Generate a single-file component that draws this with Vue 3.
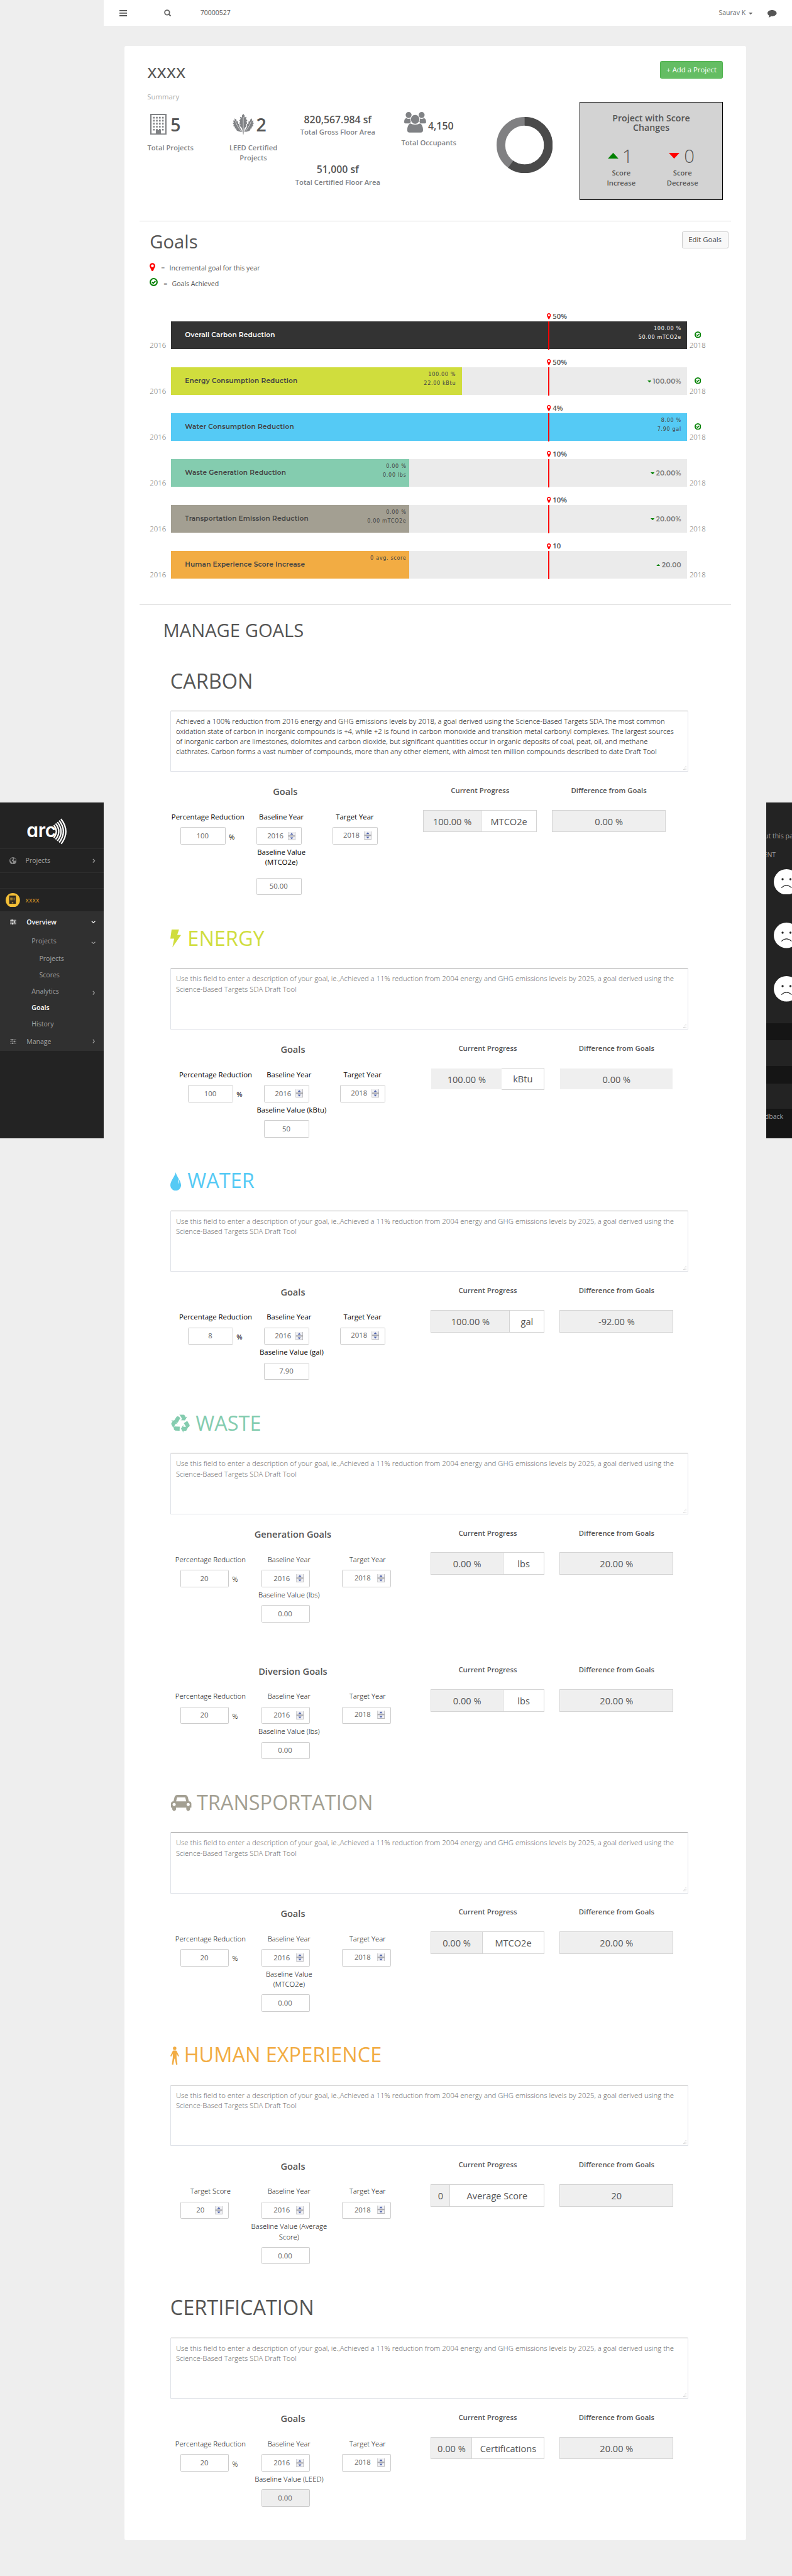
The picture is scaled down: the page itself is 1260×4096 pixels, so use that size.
<script setup>
const bars = [
  { name: 'Overall Carbon Reduction', color: '#333333', text: '#ffffff', fill: 1011, pad: 11, lines: ['100.00 %', '50.00 mTCO2e'], pin: '50%', done: true },
  { name: 'Energy Consumption Reduction', color: '#d0dd3d', text: '#444444', fill: 570, pad: 12, lines: ['100.00 %', '22.00 kBtu'], pin: '50%', delta: '100.00%', dir: 'down', done: true },
  { name: 'Water Consumption Reduction', color: '#55caf5', text: '#444444', fill: 1011, pad: 11, lines: ['8.00 %', '7.90 gal'], pin: '4%', done: true },
  { name: 'Waste Generation Reduction', color: '#84ccaf', text: '#444444', fill: 466, pad: 5, lines: ['0.00 %', '0.00 lbs'], pin: '10%', delta: '20.00%', dir: 'down' },
  { name: 'Transportation Emission Reduction', color: '#a39f92', text: '#444444', fill: 466, pad: 5, lines: ['0.00 %', '0.00 mTCO2e'], pin: '10%', delta: '20.00%', dir: 'down' },
  { name: 'Human Experience Score Increase', color: '#f2ac43', text: '#444444', fill: 466, pad: 5, lines: ['0 avg. score'], pin: '10', delta: '20.00', dir: 'up' },
]

const hint = 'Use this field to enter a description of your goal, ie.,Achieved a 11% reduction from 2004 energy and GHG emissions levels by 2025, a goal derived using the Science-Based Targets SDA Draft Tool'

const sections = [
  {
    key: 'carbon', title: 'CARBON', layout: 'first', height: 504,
    text: 'Achieved a 100% reduction from 2016 energy and GHG emissions levels by 2018, a goal derived using the Science-Based Targets SDA.The most common oxidation state of carbon in inorganic compounds is +4, while +2 is found in carbon monoxide and transition metal carbonyl complexes. The largest sources of inorganic carbon are limestones, dolomites and carbon dioxide, but significant quantities occur in organic deposits of coal, peat, oil, and methane clathrates. Carbon forms a vast number of compounds, more than any other element, with almost ten million compounds described to date Draft Tool',
    groups: [{ title: 'Goals', label: 'Percentage Reduction', value: '100', base: ['Baseline Value', '(MTCO2e)'], baseValue: '50.00', progress: '100.00 %', unit: 'MTCO2e', cell: 113, diff: '0.00 %' }],
  },
  {
    key: 'energy', title: 'ENERGY', icon: 'bolt', layout: 'shifted', height: 475,
    groups: [{ title: 'Goals', label: 'Percentage Reduction', value: '100', base: ['Baseline Value (kBtu)'], baseValue: '50', progress: '100.00 %', unit: 'kBtu', cell: 139, diff: '0.00 %', flat: true }],
  },
  {
    key: 'water', title: 'WATER', icon: 'drop', layout: 'shifted', height: 475,
    groups: [{ title: 'Goals', label: 'Percentage Reduction', value: '8', base: ['Baseline Value (gal)'], baseValue: '7.90', progress: '100.00 %', unit: 'gal', cell: 154, diff: '-92.00 %' }],
  },
  {
    key: 'waste', title: 'WASTE', icon: 'recycle', layout: 'wide', height: 743,
    groups: [
      { title: 'Generation Goals', label: 'Percentage Reduction', value: '20', base: ['Baseline Value (lbs)'], baseValue: '0.00', progress: '0.00 %', unit: 'lbs', cell: 141, diff: '20.00 %' },
      { title: 'Diversion Goals', label: 'Percentage Reduction', value: '20', base: ['Baseline Value (lbs)'], baseValue: '0.00', progress: '0.00 %', unit: 'lbs', cell: 141, diff: '20.00 %' },
    ],
  },
  {
    key: 'transport', title: 'TRANSPORTATION', icon: 'car', layout: 'wide', height: 495,
    groups: [{ title: 'Goals', label: 'Percentage Reduction', value: '20', base: ['Baseline Value', '(MTCO2e)'], baseValue: '0.00', progress: '0.00 %', unit: 'MTCO2e', cell: 100, diff: '20.00 %' }],
  },
  {
    key: 'human', title: 'HUMAN EXPERIENCE', icon: 'person', layout: 'wide', height: 495,
    groups: [{ title: 'Goals', label: 'Target Score', value: '20', spin: true, base: ['Baseline Value (Average', 'Score)'], baseValue: '0.00', progress: '0', unit: 'Average Score', cell: 37, diff: '20' }],
  },
  {
    key: 'cert', title: 'CERTIFICATION', layout: 'wide', height: 479,
    groups: [{ title: 'Goals', label: 'Percentage Reduction', value: '20', base: ['Baseline Value (LEED)'], baseValue: '0.00', disabled: true, progress: '0.00 %', unit: 'Certifications', cell: 80, diff: '20.00 %' }],
  },
]

const menu = [
  { text: 'Projects', level: 1, chev: 'down', h: 36 },
  { text: 'Projects', level: 2, h: 32 },
  { text: 'Scores', level: 2, h: 32 },
  { text: 'Analytics', level: 1, chev: 'right', h: 32 },
  { text: 'Goals', level: 1, active: true, h: 32 },
  { text: 'History', level: 1, h: 32 },
]
const windowRows = [0, 1, 2, 3, 4]

// Cells of the form row: first is the target value, the other two are year pickers.
const cellsOf = (g) => [
  { value: g.value, spin: g.spin, pct: !g.spin },
  { value: '2016', spin: true },
  { value: '2018', spin: true, up: true },
]
</script>

<template>
  <div class="page">
    <header class="topbar">
      <svg class="burger" width="15" height="13" viewBox="0 0 15 13"><path d="M0 0h15v2.200H0zM0 5h15v2.200H0zM0 10h15v2.200H0z" fill="#555" /></svg>
      <svg class="search" width="14" height="14" viewBox="0 0 14 14"><circle cx="6" cy="6" r="4.700" fill="none" stroke="#666" stroke-width="2.200" /><path d="M9 9l4 4" stroke="#666" stroke-width="2.600" /></svg>
      <span class="query">70000527</span>
      <span class="user">Saurav K</span>
      <svg class="caret" width="8" height="4" viewBox="0 0 8 4"><path d="M0 0h8L4 4z" fill="#666" /></svg>
      <svg class="bubble" width="18" height="15" viewBox="0 0 18 15"><path d="M9 0c5 0 9 2.700 9 6s-4 6.200-9 6.200c-.6 0-1.200 0-1.700-.1C5.800 13.400 4 14.300 2 14.800c.8-1 1.400-2.200 1.500-3.700C1.400 10 0 8.200 0 6c0-3.300 4-6 9-6z" fill="#555" /></svg>
    </header>

    <aside class="sidebar">
      <div class="brand">
        <span class="brand-name">arc</span>
        <svg class="waves" width="32" height="52" viewBox="0 0 32 52">
          <g fill="none" stroke="#fff" stroke-width="2.700">
            <path d="M2 13.500Q12 26 2 38.500" /><path d="M5.500 10.500Q18 26 5.500 41.500" /><path d="M9 7.500Q23.500 26 9 44.500" /><path d="M12.500 4.500Q29 26 12.500 47.500" /><path d="M16 1.500Q35 26 16.500 50.500" />
          </g>
        </svg>
      </div>
      <div class="side-row projects">
        <span class="side-icon"><svg width="14" height="14" viewBox="0 0 14 14"><circle cx="7" cy="7" r="7" fill="#8a8a8a" /><path d="M3 2.500l3-.8 1.500 1-1 1.800-2 .7.500 2 2 .8-.4 2.500-1.300 1.700-1-3-2-1.500L1.500 5zM9 3l2-.8 1.800 3-.5 1.500-2-.2-1 1.500L8 6z" fill="#232323" /></svg></span>
        <span class="side-text">Projects</span>
        <svg class="chev" width="6" height="9" viewBox="0 0 6 9"><path d="M1 1l3.500 3.500L1 8" /></svg>
      </div>
      <div class="side-gap"></div>
      <div class="side-row account">
        <span class="side-icon"><svg width="28" height="28" viewBox="0 0 28 28"><circle cx="14" cy="14" r="14" fill="#f3bf37" /><path d="M7 5h13v16H7z" fill="#2b2620" /><path d="M9 8h9M9 10.500h9M9 13h9M9 15.500h9" stroke="#f3bf37" stroke-width="1" stroke-dasharray="1.500 .8" /><path d="M12 18.500h3V20h-3z" fill="#f3bf37" /></svg></span>
        <span class="side-text">xxxx</span>
      </div>
      <div class="submenu">
        <div class="sub-head overview">
          <svg class="sliders" width="12" height="10" viewBox="0 0 12 10"><path d="M0 1.500h12M0 5h12M0 8.500h12" stroke="currentColor" stroke-width="1" /><path d="M3 0h2v3H3zM7.500 3.500h2v3h-2zM4 7h2v3H4z" fill="currentColor" /></svg>
          <span class="sub-text">Overview</span>
          <svg class="chev" width="9" height="6" viewBox="0 0 9 6"><path d="M1 1l3.500 3L8 1" /></svg>
        </div>
        <div v-for="(m, i) in menu" :key="i" class="sub-item" :class="['level' + m.level, { active: m.active }]" :style="{ height: m.h + 'px' }">
          <span class="sub-text">{{ m.text }}</span>
          <svg v-if="m.chev === 'down'" class="chev low" width="9" height="6" viewBox="0 0 9 6"><path d="M1 1l3.500 3L8 1" /></svg>
          <svg v-if="m.chev === 'right'" class="chev low" width="6" height="9" viewBox="0 0 6 9"><path d="M1 1l3 3.500L1 8" /></svg>
        </div>
        <div class="sub-head manage">
          <svg class="sliders" width="12" height="10" viewBox="0 0 12 10"><path d="M0 1.500h12M0 5h12M0 8.500h12" stroke="currentColor" stroke-width="1" /><path d="M3 0h2v3H3zM7.500 3.500h2v3h-2zM4 7h2v3H4z" fill="currentColor" /></svg>
          <span class="sub-text">Manage</span>
          <svg class="chev" width="6" height="9" viewBox="0 0 6 9"><path d="M1 1l3 3.500L1 8" /></svg>
        </div>
      </div>
    </aside>

    <main class="card">
      <div class="card-head">
        <h1>xxxx</h1>
        <button class="btn add">+ Add a Project</button>
      </div>
      <div class="summary-label">Summary</div>
      <div class="stats">
        <div class="stat s-projects">
          <div class="stat-top">
            <svg width="32" height="41" viewBox="0 0 32 41">
              <path d="M1.300 1.300h29.400v38.400H1.300z" fill="#fff" stroke="#808285" stroke-width="2.600" />
              <path v-for="r in windowRows" :key="r" :d="`M5.500 ${7.500 + r * 5.900}h21`" stroke="#808285" stroke-width="3.200" stroke-dasharray="3.200 2.700" />
              <path d="M11 32h10v8H11z" fill="#808285" />
            </svg>
            <span class="big">5</span>
          </div>
          <div class="cap">Total Projects</div>
        </div>
        <div class="stat s-leed">
          <div class="stat-top">
            <svg width="42" height="42" viewBox="0 0 42 42">
              <path fill="#808285" d="M21 0l2.500 3v4l4-1-1.300 4 3 3.500-2.200 1.500 2 3.500-2.500 2 1 3.500-4 4L22 36h-2l-1.500-8-4-4 1-3.500-2.500-2 2-3.500-2.200-1.500 3-3.500-1.300-4 4 1V3z" />
              <path fill="#808285" d="M4 9l3.500 2.500L8 15l2.500-.5.500 5 2.500.5 0 5L18 33l1.500 3C13 35 9 33.500 6.500 31L8 29.500 3.500 28l1.500-2-4-2.500L3 22 0 18l2.500-.5L1 13l3 .5zM38 9l-3.500 2.500L34 15l-2.500-.5-.5 5-2.500.5 0 5L24 33l-1.500 3C29 35 33 33.500 35.500 31L34 29.500l4.500-1.500-1.500-2 4-2.500L39 22l3-4-2.500-.5L41 13l-3 .5z" />
              <path d="M21 6v35M21 38Q12 31 5.500 15M21 38q9-7 15.500-23" fill="none" stroke="#fff" stroke-width=".8" />
              <path d="M20 36h2l-1 6z" fill="#808285" />
            </svg>
            <span class="big">2</span>
          </div>
          <div class="cap">LEED Certified<br />Projects</div>
        </div>
        <div class="stat s-floor">
          <div class="figure">820,567.984 sf</div>
          <div class="cap">Total Gross Floor Area</div>
          <div class="figure second">51,000 sf</div>
          <div class="cap">Total Certified Floor Area</div>
        </div>
        <div class="stat s-occ">
          <div class="stat-top">
            <svg width="43" height="41" viewBox="0 0 43 41" fill="#808285">
              <ellipse cx="8.700" cy="6" rx="5.800" ry="6" /><ellipse cx="34.300" cy="6" rx="5.800" ry="6" />
              <path d="M4 12q4 2.500 8 1l1 6-1.500 3.500H2Q0 22.500 0 20C0 16 1 13 4 12zM39 12q-4 2.500-8 1l-1 6 1.500 3.500H41q2 0 2-2.500c0-4-1-7-4-8z" />
              <ellipse cx="21.500" cy="14.500" rx="8.800" ry="9.300" stroke="#fff" />
              <path d="M12 22.500q9.500 5 19 0c4 2 6 6.500 6 13q0 5-4.500 5h-22Q6 40.500 6 35.500c0-6.500 2-11 6-13z" />
            </svg>
            <span class="figure">4,150</span>
          </div>
          <div class="cap">Total Occupants</div>
        </div>
        <div class="stat s-donut">
          <svg width="110" height="110" viewBox="0 0 110 110">
            <circle cx="55" cy="55" r="46.500" fill="none" stroke="#808082" stroke-width="17" />
            <circle cx="55" cy="55" r="46.500" fill="none" stroke="#4a4a4a" stroke-width="17" pathLength="100" stroke-dasharray="60 40" transform="rotate(-90 55 55)" />
          </svg>
        </div>
        <div class="score">
          <div class="score-title">Project with Score<br />Changes</div>
          <div class="score-cols">
            <div class="score-col">
              <div class="score-num one"><svg width="21" height="12" viewBox="0 0 21 12"><path d="M10.500 0L21 11.500H0z" fill="#008000" /></svg><span>1</span></div>
              <div>Score<br />Increase</div>
            </div>
            <div class="score-col">
              <div class="score-num"><svg width="21" height="12" viewBox="0 0 21 12"><path d="M0 0h21L10.500 11.500z" fill="#f00" /></svg><span>0</span></div>
              <div>Score<br />Decrease</div>
            </div>
          </div>
        </div>
      </div>

      <section class="goals">
        <div class="goals-head">
          <h2>Goals</h2>
          <button class="btn edit">Edit Goals</button>
        </div>
        <div class="legend">
          <svg width="11" height="17" viewBox="384 128 1024 1536" fill="#f00"><path d="M1152 640q0-106-75-181t-181-75-181 75-75 181 75 181 181 75 181-75 75-181zm256 0q0 109-33 179l-364 774q-16 33-47.500 52t-67.500 19-67.500-19-46.500-52l-365-774q-33-70-33-179 0-212 150-362t362-150 362 150 150 362z" /></svg>
          <span class="eq">=</span><span>Incremental goal for this year</span>
        </div>
        <div class="legend">
          <svg width="16" height="16" viewBox="0 0 16 16"><circle cx="8" cy="8" r="6.700" fill="none" stroke="#008000" stroke-width="2.600" /><path d="M4.700 7.800l2.500 2.500 4.200-4.200" fill="none" stroke="#008000" stroke-width="2.400" /></svg>
          <span class="eq">=</span><span>Goals Achieved</span>
        </div>
        <div class="bars">
          <div v-for="b in bars" :key="b.name" class="bar-row">
            <span class="year from">2016</span>
            <div class="track">
              <div class="fill" :style="{ width: b.fill + 'px', background: b.color, color: b.text }">
                <span class="bar-name">{{ b.name }}</span>
                <span class="bar-vals" :style="{ paddingRight: b.pad + 'px' }"><span v-for="l in b.lines" :key="l">{{ l }}</span></span>
              </div>
              <span v-if="b.delta" class="delta">
                <svg width="8" height="4" viewBox="0 0 8 4" fill="#008000"><path v-if="b.dir === 'down'" d="M0 0h8L4 4z" /><path v-else d="M0 4h8L4 0z" /></svg>{{ b.delta }}
              </span>
              <span class="marker"></span>
              <span class="pin">
                <svg width="8" height="12" viewBox="384 128 1024 1536" fill="#f00"><path d="M1152 640q0-106-75-181t-181-75-181 75-75 181 75 181 181 75 181-75 75-181zm256 0q0 109-33 179l-364 774q-16 33-47.500 52t-67.500 19-67.500-19-46.500-52l-365-774q-33-70-33-179 0-212 150-362t362-150 362 150 150 362z" /></svg>{{ b.pin }}
              </span>
            </div>
            <div class="end">
              <svg v-if="b.done" width="13" height="13" viewBox="0 0 16 16"><circle cx="8" cy="8" r="6.600" fill="none" stroke="#008000" stroke-width="2.800" /><path d="M4.700 7.800l2.500 2.500 4.200-4.200" fill="none" stroke="#008000" stroke-width="2.300" /></svg>
              <span class="year">2018</span>
            </div>
          </div>
        </div>
      </section>

      <h2 class="manage-title">MANAGE GOALS</h2>

      <section v-for="s in sections" :key="s.key" class="goal" :class="[s.key, s.layout]" :style="{ height: s.height + 'px' }">
        <h3>
          <svg v-if="s.icon === 'bolt'" class="hi" width="21" height="35" viewBox="0 0 21 35"><path d="M2.500 0H17l-3.500 10.500 7.500.3L4 35l3.500-17H0z" fill="currentColor" /></svg>
          <svg v-if="s.icon === 'drop'" class="hi" width="21" height="36" viewBox="0 0 21 36"><path d="M10.500 0C12 8 21 17 21 25.500a10.500 10.500 0 0 1-21 0C0 17 9 8 10.500 0z" fill="currentColor" /><path d="M15 13q3.500 6 2 10-1.500-4-2-10z" fill="#fff" /></svg>
          <svg v-if="s.icon === 'recycle'" class="hi" width="37" height="37" viewBox="0 0 1792 1792"><path fill="currentColor" d="M836 1169l-15 368-2 22-420-29q-36-3-67-31.500t-47-65.500q-11-27-14.500-55t4-65 12-55 21.500-64 19-53q78 12 509 28zM449 583l180 379-147-92q-63 72-111.500 144.500t-72.500 125-39.500 94.500-18.500 63l-4 21-190-357q-17-26-18-56t6-47l8-18q35-63 114-188l-140-86zM1680 1125l-188 359q-12 29-36.500 46.500t-43.500 20.500l-18 4q-71 7-219 12l8 164-230-367 211-362 7 173q170 16 283 5t170-33zM895 360q-47 63-265 435l-317-187-19-12 225-356q20-31 60-45t80-10q24 2 48.500 12t42 21 41.500 33 36 34.500 36 39.500 32 35zM1550 623l212 363q18 37 12.500 76t-27.500 74q-13 20-33 37t-38 28-48.500 22-47 16-51.500 14-46 12q-34-72-265-436l313-195zM1407 279l142-83-220 373-419-20 151-86q-34-89-75-166t-75.500-123.500-64.500-80-47-46.500l-17-13 405 1q31-3 58 10.500t39 28.500l11 15q39 61 112 190z" /></svg>
          <svg v-if="s.icon === 'car'" class="hi" width="40" height="35" viewBox="0 0 2048 1792" preserveAspectRatio="none"><path fill="currentColor" d="M480 1088q0-66-47-113t-113-47-113 47-47 113 47 113 113 47 113-47 47-113zm36-320h1016l-89-357q-2-8-14-17.500t-21-9.500h-768q-9 0-21 9.500t-14 17.500zm1372 320q0-66-47-113t-113-47-113 47-47 113 47 113 113 47 113-47 47-113zm160-96v384q0 14-9 23t-23 9h-96v128q0 80-56 136t-136 56-136-56-56-136v-128h-1024v128q0 80-56 136t-136 56-136-56-56-136v-128h-96q-14 0-23-9t-9-23v-384q0-93 65.500-158.500t158.500-65.500h28l105-419q23-94 104-157.500t179-63.500h768q98 0 179 63.500t104 157.500l105 419h28q93 0 158.500 65.500t65.500 158.500z" /></svg>
          <svg v-if="s.icon === 'person'" class="hi" width="17" height="36" viewBox="0 0 17 36"><circle cx="8.500" cy="3.600" r="3.400" fill="currentColor" /><path d="M6.500 8h4Q12 8 12.700 9.500L17 18.500 15.500 20l-3.300-5.500V22L14 35l-2.700 1L9 24H8L5.700 36 3 35l1.800-13v-7.500L1.500 20 0 18.500l4.300-9Q5 8 6.500 8z" fill="currentColor" /></svg>
          <span>{{ s.title }}</span>
        </h3>
        <div class="area" :class="{ filled: s.text }">
          <span class="area-text">{{ s.text || hint }}</span>
          <svg class="grip" width="9" height="9" viewBox="0 0 9 9"><path d="M7 1h1M5 4h1M7 4h1M3 7h1M5 7h1M7 7h1" stroke="#999" stroke-width="1" /></svg>
        </div>
        <div v-for="g in s.groups" :key="g.title" class="group">
          <div class="form">
            <div class="form-title">{{ g.title }}</div>
            <div class="labels"><span>{{ g.label }}</span><span>Baseline Year</span><span>Target Year</span></div>
            <div class="inputs">
              <div v-for="(c, i) in cellsOf(g)" :key="i" class="cell">
                <div class="input" :class="{ picker: c.spin, up: c.up }">
                  <span>{{ c.value }}</span>
                  <svg v-if="c.spin" class="spin" width="15" height="16" viewBox="0 0 15 16">
                    <path d="M0 0h15v16H0z" fill="#eeeef1" /><path d="M0 6.500h15v2.500H0zM0 15h15v1H0zM14 0h1v16h-1z" fill="#a8a8ac" /><path d="M0 0h1v16H0z" fill="#ccc" />
                    <path d="M4.500 5.200l3-3.700 3 3.700zM4.500 10.500l3 3.700 3-3.700z" fill="#4d62ad" />
                  </svg>
                </div>
                <span v-if="c.pct" class="pct">%</span>
              </div>
            </div>
            <div class="base">
              <div class="base-label"><div v-for="l in g.base" :key="l">{{ l }}</div></div>
              <div class="input base-input" :class="{ disabled: g.disabled }">{{ g.baseValue }}</div>
            </div>
          </div>
          <div class="result">
            <div class="result-title">Current Progress</div>
            <div class="box" :class="{ flat: g.flat }">
              <div class="val" :style="{ width: g.cell + 'px' }">{{ g.progress }}</div>
              <div class="unit">{{ g.unit }}</div>
            </div>
          </div>
          <div class="result">
            <div class="result-title">Difference from Goals</div>
            <div class="box diff" :class="{ flat: g.flat }"><div class="val">{{ g.diff }}</div></div>
          </div>
        </div>
      </section>
    </main>

    <aside class="feedback">
      <div class="fb-line l1"><span>ut this pa</span></div>
      <div class="fb-line l2"><span>ENT</span></div>
      <div class="face" v-for="n in 3" :key="n">
        <svg width="50" height="50" viewBox="0 0 50 50"><circle cx="25" cy="25" r="25" fill="#fff" /><circle cx="17.300" cy="19.700" r="2.100" fill="#232323" /><circle cx="32.700" cy="19.700" r="2.100" fill="#232323" /><path d="M15 36.500q10-9 20 0" fill="none" stroke="#232323" stroke-width="1.400" /></svg>
      </div>
      <div class="stripe one"></div>
      <div class="stripe"></div>
      <div class="stripe last"><span>dback</span></div>
    </aside>
  </div>
</template>

<style>
html, body { margin: 0; background: #eeeeee; }
</style>

<style scoped>
* { box-sizing: border-box; }
.page {
  zoom: 0.8115;
  width: 1552.600px;
  height: 5047px;
  overflow: hidden;
  display: grid;
  grid-template-columns: 203.700px 1298.700px 50.200px;
  grid-template-rows: 50px 1fr;
  align-items: start;
  background: #eeeeee;
  color: #555;
  font-family: 'Open Sans', 'Noto Sans', sans-serif;
  font-size: 14px;
  line-height: 20px;
}
h1, h2, h3 { margin: 0; font-weight: 400; }
svg { display: block; flex: none; }

.topbar { grid-column: 2 / 4; grid-row: 1; height: 50px; background: #fff; display: flex; align-items: center; padding-left: 30px; font-size: 13px; color: #666; }
.burger { margin-top: 2px; }
.search { margin: 2px 57px 0 73px; }
.query { flex: 1; color: #555; }
.caret { margin: 4px 29px 0 6px; }
.bubble { margin: 4px 30px 0 0; }

.sidebar { grid-column: 1; grid-row: 1 / 3; margin-top: 1573px; height: 657px; background: #232323; color: #a0a0a0; font-size: 13px; }
.brand { height: 91px; display: flex; padding: 30px 0 0 52px; border-bottom: 1px solid #2e2e2e; }
.brand-name { font-family: Inter, sans-serif; font-feature-settings: 'cv11'; font-weight: 600; font-size: 37px; line-height: 48px; color: #fff; width: 52px; letter-spacing: -0.200px; }
.side-row { display: flex; align-items: center; border-bottom: 1px solid #2e2e2e; height: 46px; }
.side-icon { width: 50px; display: flex; justify-content: center; flex: none; }
.side-text { flex: 1; }
.side-gap { height: 31px; border-bottom: 1px solid #2e2e2e; }
.account { height: 45px; border: 0; color: #d79a27; }
.chev { fill: none; stroke: currentColor; stroke-width: 1.500; margin-right: 16px; }
.chev.low { margin-top: 8px; }
.submenu { background: #303030; height: 273px; }
.sub-head { display: flex; align-items: center; padding-left: 20px; }
.overview { color: #fff; font-weight: 600; height: 40px; padding-top: 2px; }
.sub-head .sub-text { padding-left: 20px; }
.sub-text { flex: 1; }
.sub-item { display: flex; align-items: center; }
.level1 { padding-left: 62px; }
.level2 { padding-left: 77px; }
.active { color: #fff; font-weight: 600; }
.manage { height: 34px; padding-top: 3px; }

.card { grid-column: 2; grid-row: 2; margin: 40px 0 0 40px; width: 1219px; height: 4887px; background: #fff; border-radius: 4px; padding-top: 30px; }
.card-head { display: flex; justify-content: space-between; align-items: flex-start; height: 60px; padding: 0 45px; }
h1 { font-size: 36px; line-height: 40px; }
.btn { font: inherit; height: 34px; border-radius: 3px; padding: 0; white-space: nowrap; }
.add { background: #64bd63; border: 1px solid #4fb34e; color: #fff; width: 124px; }
.summary-label { padding-left: 45px; color: #aaa; font-weight: 500; }
.stats { display: grid; grid-template-columns: 143px 130px 201px 156px 217px 282px; padding-left: 45px; height: 232px; align-items: start; }
.stat { display: flex; flex-direction: column; align-items: center; text-align: center; font-weight: 600; color: #555; }
.cap { color: #808285; white-space: nowrap; font-size: 13.800px; }
.s-projects { width: 91px; padding-top: 23px; }
.stat-top { display: flex; }
.s-projects .stat-top { height: 57px; gap: 8px; margin-left: -20px; }
.big { font-size: 35px; line-height: 42px; }
.s-leed { padding-top: 23px; }
.s-leed .stat-top { height: 57px; gap: 4px; margin-left: -15px; }
.figure { font-size: 19.500px; line-height: 22px; }
.s-floor { padding: 24px 0 0; }
.s-floor .cap { margin-top: 3px; }
.s-floor .second { margin-top: 53px; }
.s-occ { padding-top: 19px; }
.s-occ .stat-top { height: 51px; gap: 4px; }
.s-occ .figure { margin-top: 18px; }
.s-donut { padding: 29px 0 0 2px; }
.score { height: 192px; border: 1px solid #000; background: #d3d3d3; text-align: center; padding-top: 20px; font-weight: 600; font-size: 13.800px; }
.score-title { font-size: 17.500px; line-height: 19.500px; }
.score-cols { display: flex; padding: 21px 0 0 21px; }
.score-col { width: 120px; }
.score-num { display: flex; justify-content: center; align-items: center; gap: 9px; height: 48px; font-size: 36px; font-weight: 300; padding-right: 3px; }
.score-num.one { gap: 7px; padding-right: 3px; }

.goals { width: 1159px; margin-left: 30px; border-top: 1px solid #ddd; border-bottom: 1px solid #ddd; height: 753px; padding: 20px 5px 0 20px; }
.goals-head { display: flex; justify-content: space-between; height: 59px; }
h2 { font-size: 36px; line-height: 40px; }
.edit { width: 91px; background: #f8f8f8; border: 1px solid #ccc; color: #444; }
.legend { display: flex; align-items: center; height: 30px; font-size: 13px; padding-bottom: 3px; }
.legend svg { margin-top: -5px; }
.eq { margin: 0 9px 0 11px; }
.bars { padding-top: 57px; }
.bar-row { display: flex; height: 55px; margin-bottom: 35px; }
.year { color: #666; font-weight: 300; }
.from { width: 42px; align-self: flex-end; margin-bottom: -3px; }
.track { position: relative; width: 1011px; background: #ebebeb; display: flex; align-items: center; justify-content: space-between; flex: none; }
.fill { height: 55px; display: flex; justify-content: space-between; align-items: center; padding-left: 27px; }
.bar-name { font-family: Montserrat, Inter, sans-serif; font-weight: 600; font-size: 13px; letter-spacing: 0.200px; white-space: nowrap; padding-top: 1px; }
.bar-vals { align-self: flex-start; padding-top: 7px; display: flex; flex-direction: column; align-items: flex-end; font-family: 'DejaVu Sans', sans-serif; font-size: 10px; line-height: 17px; letter-spacing: 0.800px; }
.delta { display: flex; align-items: center; gap: 3px; padding: 2px 11px 0 0; font-family: Montserrat, Inter, sans-serif; font-weight: 600; font-size: 13px; letter-spacing: 0.300px; color: #777; }
.marker { position: absolute; left: 739px; top: 1px; width: 2px; height: 55px; background: #f00; }
.pin { position: absolute; left: 736px; top: -19px; display: flex; align-items: center; gap: 4px; font-weight: 600; }
.end { width: 42px; display: flex; flex-direction: column; align-items: center; justify-content: flex-end; gap: 5px; margin-bottom: -3px; }

.manage-title { margin: 30px 0 0 76px; height: 96px; }
.goal { padding-left: 90px; }
h3 { font-size: 40px; line-height: 46px; height: 82px; display: flex; }
.first h3 { height: 81px; }
.hi { margin: 7px 13px 0 0; }
.energy { color: #d0dd3d; }
.water { color: #55caf5; }
.waste { color: #84ccaf; }
.transport { color: #a39f92; }
.transport .hi { margin-left: 2px; margin-right: 10px; }
.waste .hi { margin-left: 1px; margin-right: 12px; }
.human { color: #f2ac43; }
.human .hi { margin-right: 10px; }
.carbon, .cert { color: #555; }
.area { width: 1016px; height: 120px; border: 1px solid #dfe2e8; border-top-color: #a9a9a9; border-radius: 2px; padding: 10px; color: #666; font-weight: 300; display: flex; justify-content: space-between; }
.area.filled { color: #000; }
.area-text { width: 982px; flex: none; }
.grip { align-self: flex-end; margin: 0 -8px -9px 0; }
.group { display: flex; height: 268px; color: #555; }
.form { width: 511px; padding-top: 29px; flex: none; }
.first .form { width: 496px; }
.form-title { width: 481px; text-align: center; font-size: 18px; font-weight: 600; }
.first .form-title { width: 451px; }
.labels { display: flex; padding: 30px 0 10px 2px; color: #000; }
.shifted .labels { padding-left: 17px; }
.labels span { width: 154px; text-align: center; flex: none; white-space: nowrap; }
.first .labels span, .shifted .labels span { width: 144px; }
.wide .labels, .wide .base-label { font-weight: 300; }
.inputs { display: flex; padding-left: 20px; }
.shifted .inputs { padding-left: 35px; }
.cell { width: 158.500px; flex: none; display: flex; }
.first .cell, .shifted .cell { width: 149px; }
.input { width: 95.500px; height: 34px; border: 1px solid #ccc; border-radius: 2px; background: #fff; color: #666; display: flex; align-items: center; justify-content: center; padding-right: 2px; }
.first .input, .shifted .input { width: 89px; }
.pct { color: #000; margin: 9px 0 0 6px; }
.wide .pct { font-weight: 300; }
.input.up > * { margin-top: -2px; }
.spin { margin-left: 8px; }
.wide .spin { margin-left: 12px; }
.input.picker { padding: 0 0 0 20px; justify-content: flex-start; }
.wide .input.picker { padding-left: 23px; }
.wide .cell:first-child .picker { padding-left: 30px; }
.wide .cell:first-child .spin { margin-left: 20px; }
.base { padding-top: 5px; }
.base-label { width: 154px; margin-left: 156px; text-align: center; color: #000; white-space: nowrap; padding-bottom: 10px; }
.shifted .base-label { width: 144px; margin-left: 166px; }
.first .base-label { width: 144px; margin-left: 146px; padding-bottom: 20px; }
.base-input { margin-left: 178.500px; }
.first .base-input { margin-left: 169px; }
.shifted .base-input { margin-left: 184px; }
.input.disabled { background: #eee; }
.result { width: 223px; margin-right: 29.500px; padding-top: 27px; flex: none; }
.result-title { text-align: center; font-weight: 600; height: 48px; }
.box { height: 44px; border: 1px solid #d4d4d4; display: flex; font-size: 18px; line-height: 42px; text-align: center; white-space: nowrap; }
.val { background: #efefef; border-right: 1px solid #d4d4d4; flex: none; }
.unit { flex: 1; }
.diff .val { width: 100%; border: 0; }
.flat { border-color: transparent; }
.flat .val { border-right: 2px solid #fff; }
.flat.diff .val { border: 0; }
.flat .unit { margin: -1px; border: 1px solid #d4d4d4; border-left: 0; line-height: 41px; }

.feedback { grid-column: 3; grid-row: 2; margin-top: 1523px; height: 657px; background: #232323; overflow: hidden; color: #a0a0a0; display: flex; flex-direction: column; font-size: 13px; }
.fb-line { white-space: nowrap; height: 20px; flex: none; display: flex; }
.l1 { margin-top: 55px; }
.l1 span { margin-left: -4px; }
.l2 { margin-top: 17px; width: 18.500px; justify-content: flex-end; }
.face { margin: 18px 0 37px 14px; height: 50px; width: 50px; flex: none; }
.stripe { height: 34px; background: #151515; margin-bottom: 50px; flex: none; }
.stripe.one { margin-top: 5px; }
.stripe.last { height: 57px; margin: 0; padding: 5px 17px 0 0; display: flex; justify-content: flex-end; }
</style>
